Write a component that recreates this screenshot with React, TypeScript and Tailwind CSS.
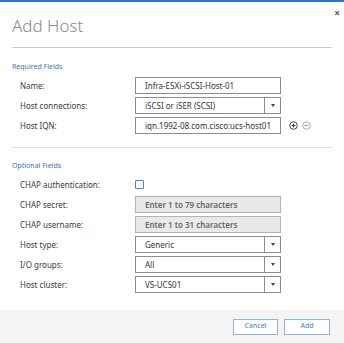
import React from "react";

const Select = ({ value }: { value: string }) => (
  <div className="flex h-[17px] w-[146px] items-stretch border border-[#8d8d8d] bg-white">
    <span className="flex-1 pl-[9px] text-[8px] leading-[15px] text-[#333]">{value}</span>
    <span className="flex w-[16px] items-center justify-center border-l border-[#8d8d8d]">
      <span className="h-0 w-0 border-x-[2.5px] border-t-[3px] border-x-transparent border-t-[#444]" />
    </span>
  </div>
);

const TextBox = ({ value }: { value: string }) => (
  <div className="h-[17px] w-[146px] border border-[#8d8d8d] bg-white pl-[9px] text-[8px] leading-[15px] text-[#333]">
    {value}
  </div>
);

const Disabled = ({ placeholder }: { placeholder: string }) => (
  <div className="h-[17px] w-[146px] border border-[#b4b4b4] bg-[#e9e9e9] pl-[9px] text-[8px] font-semibold leading-[15px] text-[#666]">
    {placeholder}
  </div>
);

const Row = ({ label, children }: { label: string; children: React.ReactNode }) => (
  <div className="flex h-[17px] items-center">
    <span className="w-[123px] shrink-0 pl-[8px] text-[8px] text-[#3a3a3a]">{label}</span>
    {children}
  </div>
);

export default function App() {
  return (
    <div
      className="flex h-[343px] w-[344px] flex-col border-t-2 border-[#2c74c4] bg-white"
      style={{ fontFamily: '"Noto Sans", "Open Sans", sans-serif' }}
    >
      <div className="relative px-[12px] pt-[12px]">
        <h1 className="text-[17px] font-light leading-[24px] text-[#8a8a8a]">Add Host</h1>
        <span className="absolute right-[4px] top-[4px] text-[10px] font-bold text-[#555]">×</span>
        <div className="mt-[9px] h-px w-[320px] bg-[#c8c8c8]" />

        <div className="mt-[14px] text-[7px] leading-[10px] text-[#3b73b9]">Required Fields</div>
        <div className="mt-[5px] flex flex-col gap-[3px]">
          <Row label="Name:">
            <TextBox value="Infra-ESXi-iSCSI-Host-01" />
          </Row>
          <Row label="Host connections:">
            <Select value="iSCSI or iSER (SCSI)" />
          </Row>
          <Row label="Host IQN:">
            <TextBox value="iqn.1992-08.com.cisco:ucs-host01" />
            <div className="ml-[8px] flex items-center gap-[4px]">
              <svg width="9" height="9" viewBox="0 0 10 10">
                <circle cx="5" cy="5" r="4.2" fill="none" stroke="#333" strokeWidth="1" />
                <path d="M5 2.8v4.4M2.8 5h4.4" stroke="#333" strokeWidth="1.1" />
              </svg>
              <svg width="9" height="9" viewBox="0 0 10 10">
                <circle cx="5" cy="5" r="4.2" fill="none" stroke="#999" strokeWidth="0.9" />
                <path d="M2.8 5h4.4" stroke="#999" strokeWidth="1" />
              </svg>
            </div>
          </Row>
        </div>

        <div className="mt-[13px] h-px w-[320px] bg-[#e0e0e0]" />

        <div className="mt-[13px] text-[7px] leading-[10px] text-[#3b73b9]">Optional Fields</div>
        <div className="mt-[5px] flex flex-col gap-[3px]">
          <Row label="CHAP authentication:">
            <span className="h-[9px] w-[9px] rounded-[1px] border border-[#4a86c5] bg-white" />
          </Row>
          <Row label="CHAP secret:">
            <Disabled placeholder="Enter 1 to 79 characters" />
          </Row>
          <Row label="CHAP username:">
            <Disabled placeholder="Enter 1 to 31 characters" />
          </Row>
          <Row label="Host type:">
            <Select value="Generic" />
          </Row>
          <Row label="I/O groups:">
            <Select value="All" />
          </Row>
          <Row label="Host cluster:">
            <Select value="VS-UCS01" />
          </Row>
        </div>
      </div>

      <div className="mt-auto flex h-[33px] items-center justify-end gap-[6px] bg-[#f4f4f4] pr-[14px]">
        <button className="h-[16px] w-[45px] border border-[#8db6dc] bg-white text-[7px] text-[#3f7dbd]">
          Cancel
        </button>
        <button className="h-[16px] w-[46px] border border-[#8db6dc] bg-white text-[7px] text-[#3f7dbd]">
          Add
        </button>
      </div>
    </div>
  );
}
